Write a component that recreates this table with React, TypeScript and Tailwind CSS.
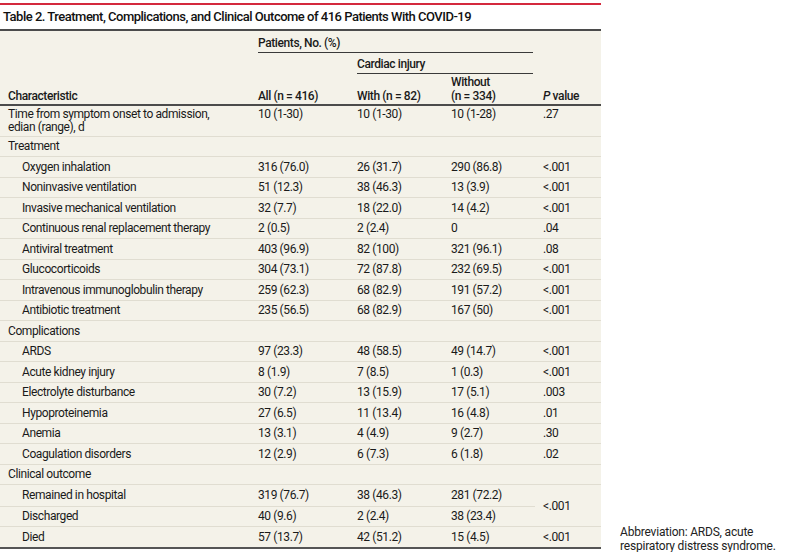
import React from "react"

type Row =
  | { kind: "head"; label: string }
  | { kind: "item"; label: string; all: string; with: string; without: string; p: string }

const rows: Row[] = [
  { kind: "head", label: "Treatment" },
  { kind: "item", label: "Oxygen inhalation", all: "316 (76.0)", with: "26 (31.7)", without: "290 (86.8)", p: "<.001" },
  { kind: "item", label: "Noninvasive ventilation", all: "51 (12.3)", with: "38 (46.3)", without: "13 (3.9)", p: "<.001" },
  { kind: "item", label: "Invasive mechanical ventilation", all: "32 (7.7)", with: "18 (22.0)", without: "14 (4.2)", p: "<.001" },
  { kind: "item", label: "Continuous renal replacement therapy", all: "2 (0.5)", with: "2 (2.4)", without: "0", p: ".04" },
  { kind: "item", label: "Antiviral treatment", all: "403 (96.9)", with: "82 (100)", without: "321 (96.1)", p: ".08" },
  { kind: "item", label: "Glucocorticoids", all: "304 (73.1)", with: "72 (87.8)", without: "232 (69.5)", p: "<.001" },
  { kind: "item", label: "Intravenous immunoglobulin therapy", all: "259 (62.3)", with: "68 (82.9)", without: "191 (57.2)", p: "<.001" },
  { kind: "item", label: "Antibiotic treatment", all: "235 (56.5)", with: "68 (82.9)", without: "167 (50)", p: "<.001" },
  { kind: "head", label: "Complications" },
  { kind: "item", label: "ARDS", all: "97 (23.3)", with: "48 (58.5)", without: "49 (14.7)", p: "<.001" },
  { kind: "item", label: "Acute kidney injury", all: "8 (1.9)", with: "7 (8.5)", without: "1 (0.3)", p: "<.001" },
  { kind: "item", label: "Electrolyte disturbance", all: "30 (7.2)", with: "13 (15.9)", without: "17 (5.1)", p: ".003" },
  { kind: "item", label: "Hypoproteinemia", all: "27 (6.5)", with: "11 (13.4)", without: "16 (4.8)", p: ".01" },
  { kind: "item", label: "Anemia", all: "13 (3.1)", with: "4 (4.9)", without: "9 (2.7)", p: ".30" },
  { kind: "item", label: "Coagulation disorders", all: "12 (2.9)", with: "6 (7.3)", without: "6 (1.8)", p: ".02" },
  { kind: "head", label: "Clinical outcome" },
]

const outcome = [
  { label: "Remained in hospital", all: "319 (76.7)", with: "38 (46.3)", without: "281 (72.2)" },
  { label: "Discharged", all: "40 (9.6)", with: "2 (2.4)", without: "38 (23.4)" },
]

function Cells({ label, all, w, without }: { label: string; all: string; w: string; without: string }) {
  return (
    <>
      <div className="w-[250px] pl-[22px]">{label}</div>
      <div className="w-[99px] pl-2">{all}</div>
      <div className="w-[94px] pl-2">{w}</div>
      <div className="w-[92px] pl-2">{without}</div>
    </>
  )
}

export default function App() {
  return (
    <div className="w-[810px] h-[552px] bg-white text-[#1a1a1a] font-['Roboto','Lato',sans-serif] text-[12px] leading-[14px] tracking-[-0.4px] flex items-end">
      <div className="w-[601px] pt-[3px] self-start">
        <div className="h-[2px] bg-[#d4293d]" />
        <div className="h-[24px] flex items-center pl-[3px] text-[13px] font-medium tracking-[-0.5px] text-[#111]">
          Table 2. Treatment, Complications, and Clinical Outcome of 416 Patients With COVID-19
        </div>
        <div className="h-[1.5px] bg-[#4b4b4b]" />

        <div className="bg-[#f4f2e9]">
          <div className="grid grid-cols-[250px_99px_94px_92px_66px] grid-rows-[22px_21px_30px] font-medium">
            <div className="col-start-1 row-start-1 row-span-3 self-end pl-2 pb-[1px]">Characteristic</div>
            <div className="col-start-2 col-span-3 row-start-1 ml-2 mr-[2px] border-b border-[#3a3a3a] flex items-end pb-[2px]">
              Patients, No. (%)
            </div>
            <div className="col-start-5 row-start-1 row-span-3 self-end pl-2 pb-[1px]">
              <span className="italic">P</span> value
            </div>
            <div className="col-start-2 row-start-2 row-span-2 self-end pl-2 pb-[1px]">All (n = 416)</div>
            <div className="col-start-3 col-span-2 row-start-2 ml-2 mr-[2px] border-b border-[#3a3a3a] flex items-end pb-[2px]">
              Cardiac injury
            </div>
            <div className="col-start-3 row-start-3 self-end pl-2 pb-[1px]">With (n = 82)</div>
            <div className="col-start-4 row-start-3 self-end pl-2 pb-[1px]">
              Without
              <br />
              (n = 334)
            </div>
          </div>
          <div className="h-[2px] bg-[#4b4b4b]" />

          <div className="flex h-[30px] pt-[2px] leading-[13px]">
            <div className="w-[250px] pl-2">
              Time from symptom onset to admission,
              <br />
              edian (range), d
            </div>
            <div className="w-[99px] pl-2">10 (1-30)</div>
            <div className="w-[94px] pl-2">10 (1-30)</div>
            <div className="w-[92px] pl-2">10 (1-28)</div>
            <div className="w-[66px] pl-2">.27</div>
          </div>

          {rows.map((r, i) => (
            <div key={i} className="flex items-center h-[20.5px] border-t border-[#e0ddd1]">
              {r.kind === "head" ? (
                <div className="pl-2">{r.label}</div>
              ) : (
                <>
                  <Cells label={r.label} all={r.all} w={r.with} without={r.without} />
                  <div className="w-[66px] pl-2">{r.p}</div>
                </>
              )}
            </div>
          ))}

          <div className="flex border-t border-[#e0ddd1]">
            <div className="flex flex-col">
              {outcome.map((o, i) => (
                <div key={i} className={`flex items-center h-[20.5px] ${i > 0 ? "border-t border-[#e0ddd1]" : ""}`}>
                  <Cells label={o.label} all={o.all} w={o.with} without={o.without} />
                </div>
              ))}
            </div>
            <div className="w-[66px] pl-2 flex items-center">&lt;.001</div>
          </div>
          <div className="flex items-center h-[20.5px] border-t border-[#e0ddd1]">
            <Cells label="Died" all="57 (13.7)" w="42 (51.2)" without="15 (4.5)" />
            <div className="w-[66px] pl-2">&lt;.001</div>
          </div>
        </div>
        <div className="h-[2px] bg-[#555]" />
      </div>

      <div className="ml-[19px] mb-[-1px] w-[180px] text-[12px] leading-[14px] tracking-[-0.2px] text-[#222]">
        Abbreviation: ARDS, acute respiratory distress syndrome.
      </div>
    </div>
  )
}
